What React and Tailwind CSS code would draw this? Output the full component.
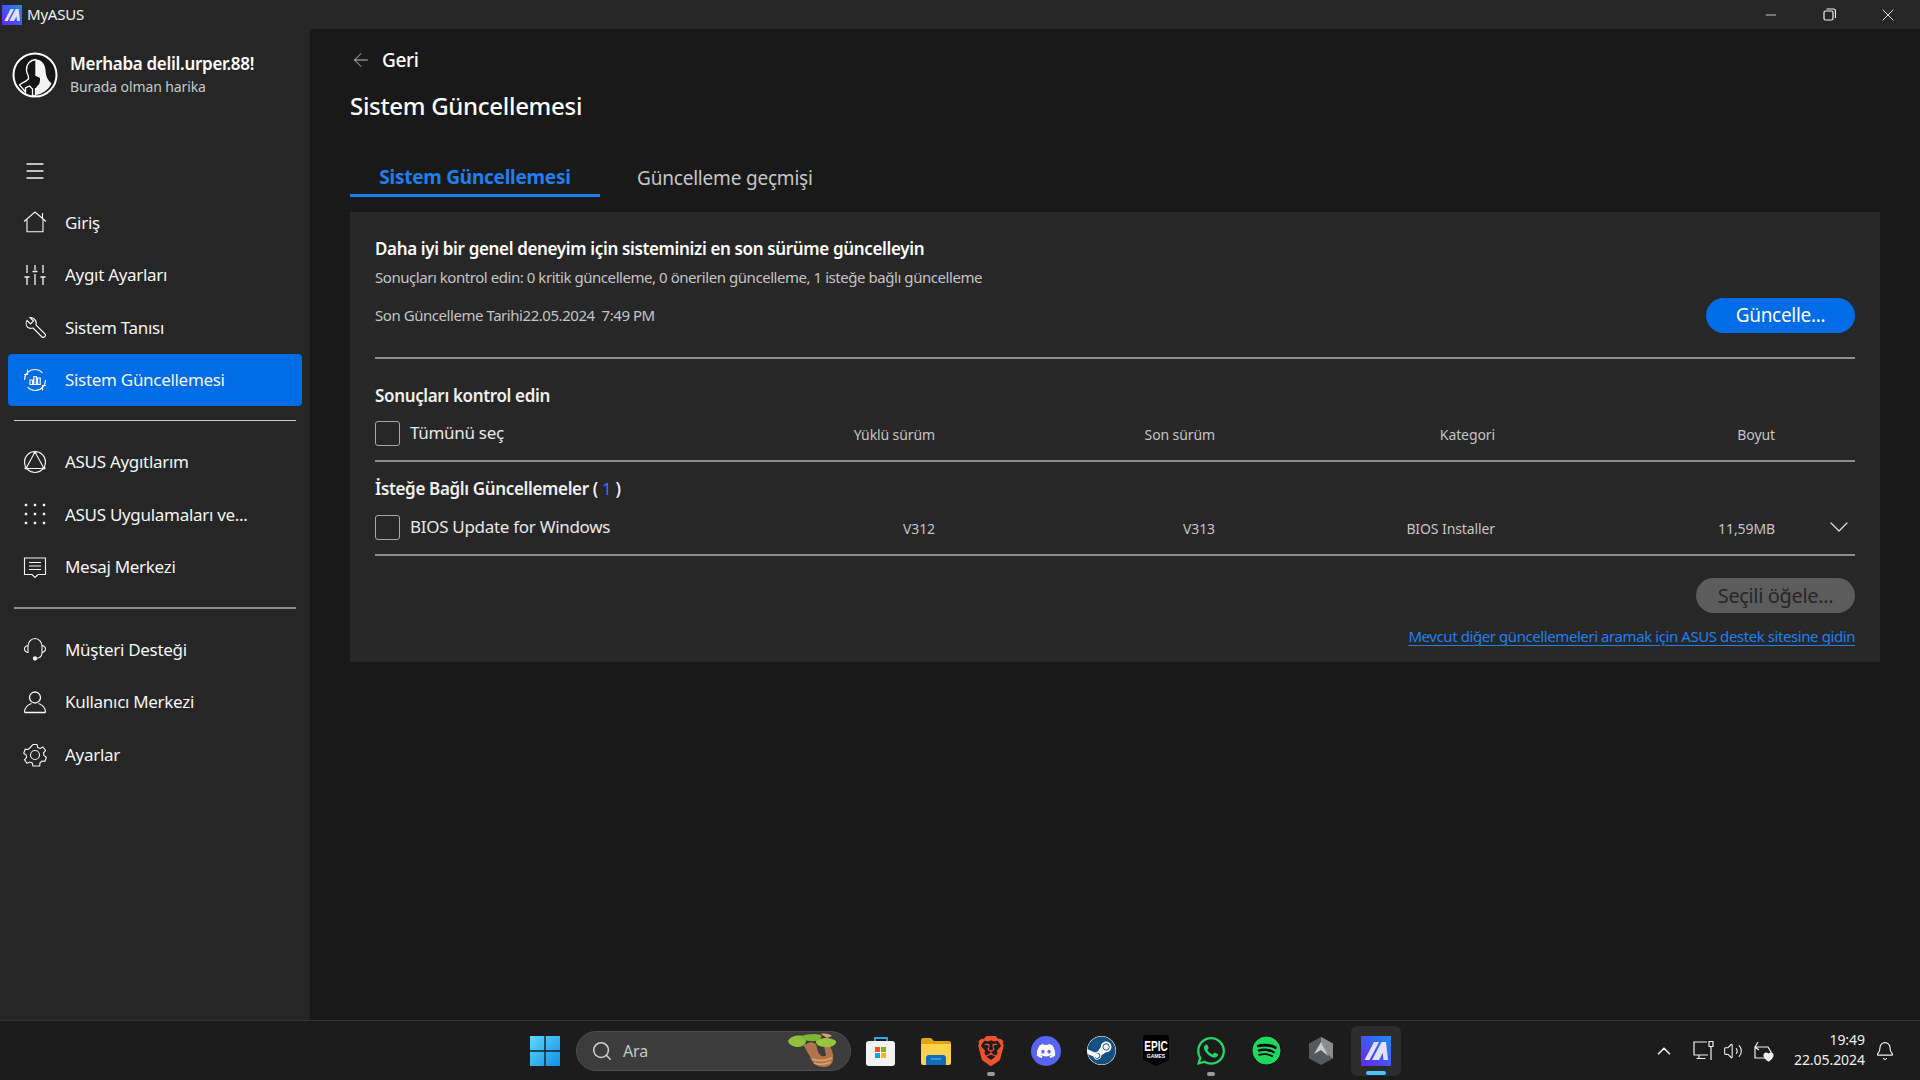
import React from 'react';
import { Minus, X, Menu, ArrowLeft, ChevronDown, ChevronUp, Search, Bell, Volume2 } from 'lucide-react';
import { FaDiscord, FaSteam, FaWhatsapp, FaSpotify } from 'react-icons/fa';
import { SiBrave } from 'react-icons/si';

const font = "font-['Noto_Sans',sans-serif]";

const Ico = ({ children, size = 24 }) => (
    <svg width={size} height={size} viewBox="0 0 24 24" fill="none" stroke="currentColor" strokeWidth="1.1" className="shrink-0">
        {children}
    </svg>
);

const HomeIcon = () => (
    <Ico>
        <path d="M1 11.500 12 2l11 9.500M4 9.500v12.200h16V9.500M19.500 3v5" />
    </Ico>
);
const SlidersIcon = () => (
    <Ico>
        <path d="M4 2v8M12 2v5M20 2v8M1.500 14h5M9.500 8.500h5M17.500 14h5M4 14v8M12 11v11M20 14v8" strokeWidth="1.300" />
    </Ico>
);
const WrenchIcon = () => (
    <Ico>
        <path d="M7 2.500 10.500 6 7.500 9 4 5.500C2.500 8 3 11 5 12.500c1.800 1.200 3.500 1 5 .5l9 9c.7.700 1.600.7 2.300 0l.7-.7c.7-.7.7-1.600 0-2.300l-9-9c.6-2 .2-4-1.300-5.500C10.300 3 8.500 2.300 7 2.500Z" />
    </Ico>
);
const UpdateIcon = () => (
    <Ico>
        <path d="M1.500 12C1.500 6 6 1.500 12 1.500c3 0 5.500 1.200 7.500 3.300M22.500 12c0 6-4.500 10.500-10.500 10.500-3 0-5.500-1.200-7.500-3.300" />
        <path d="M4.500 1.500v5h-.1h-3.500M19.500 22.500v-5h3.500" />
        <path d="M7 12h2.600v4.500H7zM10.800 8.500h2.600v8h-2.600zM14.600 10h2.600v6.500h-2.600z" strokeWidth="1.200" />
    </Ico>
);
const DevicesIcon = () => (
    <Ico>
        <circle cx="12" cy="12" r="10.500" />
        <path d="M12 2 21 18.500H3Z" />
        <circle cx="12" cy="2.200" r="1" fill="currentColor" />
        <circle cx="21" cy="18" r="1" fill="currentColor" />
        <circle cx="3" cy="18" r="1" fill="currentColor" />
    </Ico>
);
const DotsIcon = () => (
    <svg width="24" height="24" viewBox="0 0 24 24" fill="currentColor" className="shrink-0">
        {[3, 12, 21].map(y => [3, 12, 21].map(x => <rect key={`${x}-${y}`} x={x - 1.2} y={y - 1.2} width="2.400" height="2.400" />))}
    </svg>
);
const MessageIcon = () => (
    <Ico>
        <path d="M1.500 3h21v16.500h-7.500L12 22.500l-3-3H1.500Z" />
        <path d="M6 7.500h12M6 11h12M6 14.500h12" />
    </Ico>
);
const HeadsetIcon = () => (
    <Ico>
        <path d="M5 16V9.500C5 5 8 1.500 12 1.500S19 5 19 9.500V16c0 3-2 5-6 5.500" />
        <path d="M5 8.500C2.800 9 1.500 10.500 1.500 12S2.800 15 5 15.500M19 8.500c2.200.500 3.500 2 3.500 3.500S21.200 15 19 15.500" />
        <circle cx="12" cy="21.500" r="1.600" fill="currentColor" />
    </Ico>
);
const UserIcon = () => (
    <Ico>
        <circle cx="12" cy="7.500" r="5.500" strokeWidth="1.300" />
        <path d="M1.500 22.500c0-5 4-8 7-9M22.500 22.500c0-5-4-8-7-9M1.500 22.500h21" strokeWidth="1.300" />
    </Ico>
);
const GearIcon = () => (
    <Ico>
        <circle cx="12" cy="12" r="4.500" />
        <path d="M10 1.500h4l.7 3 2.500 1 2.700-1.500 2.700 3.500-2 2.300.3 2.700 2.500 1.800-1.500 4-3-.3-2 2-.2 3H10l-.8-3-2.400-1-2.800 1.300-2.500-3.500 2-2.300-.3-2.500-2.500-1.800 1.500-4 3 .3 2-2Z" />
    </Ico>
);

const AsusLogo = ({ size, id }) => (
    <svg width={size} height={size} viewBox="0 0 30 30" className="shrink-0">
        <defs>
            <linearGradient id={id} x1="0" y1="1" x2="1" y2="0">
                <stop offset="0" stopColor="#6a22f5" />
                <stop offset="1" stopColor="#1c8af0" />
            </linearGradient>
        </defs>
        <rect width="30" height="30" fill={`url(#${id})`} />
        <path d="M3.500 24 13 6h5L8.500 24ZM11 24 20.500 6h4.500l2 18h-4.500l-.8-7-3.700 7Z" fill="#dfe2ff" />
    </svg>
);

const Avatar = () => (
    <svg width="46" height="46" viewBox="0 0 46 46" className="shrink-0">
        <circle cx="23" cy="23" r="21.500" fill="#151515" stroke="#fff" strokeWidth="2" />
        <path d="M24 7.500c5.500 0 9 4.500 9.500 10.500.4 5 1 9 6 13.500-3 6.500-9.500 11-16.500 11.500V38l2-4c3-1 3-5 3-8l-4-2Z" fill="#f2f2f2" />
        <path d="M24 7.500c-6 .5-10 5-9.500 11 .3 3.500 2.500 5.500 2 8-.5 2.500-7 4-9 6.500l6 7V36l4-2 3 3v7h3V36" fill="none" stroke="#fff" strokeWidth="1.300" />
        <path d="M24 7.500V24" stroke="#fff" strokeWidth="1.300" />
    </svg>
);

const navGroups = [
    [
        { label: 'Giriş', icon: HomeIcon },
        { label: 'Aygıt Ayarları', icon: SlidersIcon },
        { label: 'Sistem Tanısı', icon: WrenchIcon },
        { label: 'Sistem Güncellemesi', icon: UpdateIcon, active: true },
    ],
    [
        { label: 'ASUS Aygıtlarım', icon: DevicesIcon },
        { label: 'ASUS Uygulamaları ve...', icon: DotsIcon },
        { label: 'Mesaj Merkezi', icon: MessageIcon },
    ],
    [
        { label: 'Müşteri Desteği', icon: HeadsetIcon },
        { label: 'Kullanıcı Merkezi', icon: UserIcon },
        { label: 'Ayarlar', icon: GearIcon },
    ],
];

function NavItem({ item }) {
    const Icon = item.icon;
    return (
        <div className={`flex items-center h-[52.6px] pl-[15px] gap-[18px] rounded-[4px] text-[#f5f5f5] text-[17px] tracking-[-0.3px] ${item.active ? 'bg-[#006ce5]' : ''}`}>
            <Icon />
            <span>{item.label}</span>
        </div>
    );
}

function Sidebar() {
    return (
        <aside className="w-[310px] shrink-0 bg-[#262626] flex flex-col">
            <div className="flex items-center h-[76px] mt-[8px] pl-[12px] gap-[12px]">
                <Avatar />
                <div className="flex flex-col -mt-[1px]">
                    <span className="text-white text-[17px] leading-[24px] font-semibold tracking-[-0.3px]">Merhaba delil.urper.88!</span>
                    <span className="text-[#c8c8c8] text-[14px] leading-[21px] tracking-[-0.1px]">Burada olman harika</span>
                </div>
            </div>
            <div className="h-[38px] mt-[39px] pl-[23px] flex items-center text-[#f5f5f5]">
                <Menu size={24} strokeWidth={1.3} />
            </div>
            <div className="px-[8px] mt-[6px] flex flex-col">
                {navGroups.map((group, i) => (
                    <div key={i}>
                        {i > 0 && <div className={`mx-[6px] my-[14px] ${i === 1 ? 'h-px bg-[#c9c9c9]' : 'h-[2px] bg-[#8c8c8c]'}`} />}
                        {group.map(item => <NavItem key={item.label} item={item} />)}
                    </div>
                ))}
            </div>
        </aside>
    );
}

function Checkbox() {
    return <span className="w-[25px] h-[25px] rounded-[3px] border-[1.5px] border-[#a8a8a8] shrink-0" />;
}

const rowGrid = 'grid grid-cols-[560px_280px_280px_280px_1fr] items-center';

function Main() {
    return (
        <main className="flex-1 bg-[#191919] pl-[40px] pr-[40px] min-w-0">
            <div className="flex items-center h-[30px] mt-[16px] gap-[10px] text-white">
                <ArrowLeft size={22} strokeWidth={1} className="text-[#d0d0d0]" />
                <span className="text-[19px] font-medium tracking-[-0.3px]">Geri</span>
            </div>
            <h1 className="text-white text-[24px] leading-[34px] font-medium tracking-[-0.3px] mt-[14px]">Sistem Güncellemesi</h1>
            <div className="flex mt-[30px] h-[44px]">
                <div className="w-[250px] h-[44px] border-b-[3px] border-[#1b7cf0] flex justify-center items-center pt-[7px] text-[#1f7fee] text-[19px] font-bold tracking-[-0.25px]">Sistem Güncellemesi</div>
                <div className="ml-[37px] flex items-center pt-[7px] text-[#c6c6c6] text-[19px] tracking-[-0.2px]">Güncelleme geçmişi</div>
            </div>
            <section className="bg-[#272727] mt-[15px] h-[450px] px-[25px] pt-[25px]">
                <div className="flex justify-between">
                    <div>
                        <p className="text-white text-[17px] leading-[24px] font-semibold tracking-[-0.35px]">Daha iyi bir genel deneyim için sisteminizi en son sürüme güncelleyin</p>
                        <p className="text-[#c4c4c4] text-[15px] leading-[20px] mt-[6px] tracking-[-0.45px]">Sonuçları kontrol edin: 0 kritik güncelleme, 0 önerilen güncelleme, 1 isteğe bağlı güncelleme</p>
                        <p className="text-[#c4c4c4] text-[15px] leading-[20px] mt-[18px] tracking-[-0.45px]">Son Güncelleme Tarihi22.05.2024&nbsp;&nbsp;7:49 PM</p>
                    </div>
                    <button className="w-[149px] h-[35px] mt-[61px] rounded-full bg-[#006ce5] text-white text-[19px] tracking-[-0.3px]">Güncelle...</button>
                </div>
                <div className="h-[2px] bg-[#8e8e8e] mt-[24px]" />
                <p className="text-[#f0f0f0] text-[17px] leading-[24px] font-semibold tracking-[-0.35px] mt-[25px]">Sonuçları kontrol edin</p>
                <div className={`${rowGrid} h-[38px] mt-[6px] text-[#c4c4c4] text-[14px] tracking-[-0.1px]`}>
                    <div className="flex justify-between items-center">
                        <div className="flex items-center gap-[10px] text-[#e8e8e8] text-[17px] tracking-[-0.3px]"><Checkbox />Tümünü seç</div>
                        <span className="pt-[3px]">Yüklü sürüm</span>
                    </div>
                    <span className="text-right pt-[3px]">Son sürüm</span>
                    <span className="text-right pt-[3px]">Kategori</span>
                    <span className="text-right pt-[3px]">Boyut</span>
                </div>
                <div className="h-[2px] bg-[#8e8e8e] mt-[8px]" />
                <p className="text-[#f0f0f0] text-[17px] leading-[24px] font-semibold tracking-[-0.35px] mt-[15px]">İsteğe Bağlı Güncellemeler ( <span className="text-[#1f7fee] font-normal">1</span> )</p>
                <div className={`${rowGrid} h-[38px] mt-[7px] text-[#c4c4c4] text-[14px] tracking-[-0.1px]`}>
                    <div className="flex justify-between items-center">
                        <div className="flex items-center gap-[10px] text-[#e8e8e8] text-[17px] tracking-[-0.3px]"><Checkbox />BIOS Update for Windows</div>
                        <span className="pt-[3px]">V312</span>
                    </div>
                    <span className="text-right pt-[3px]">V313</span>
                    <span className="text-right pt-[3px]">BIOS Installer</span>
                    <span className="text-right pt-[3px]">11,59MB</span>
                    <div className="flex justify-end"><ChevronDown size={32} strokeWidth={0.9} className="text-[#e0e0e0]" /></div>
                </div>
                <div className="h-[2px] bg-[#8e8e8e] mt-[8px]" />
                <div className="flex justify-end mt-[22px]">
                    <button className="w-[159px] h-[35px] rounded-full bg-[#5c5c5c] text-[#262626] text-[20px] tracking-[-0.35px]">Seçili öğele...</button>
                </div>
                <div className="flex justify-end mt-[13px]">
                    <a className="text-[#1f7fee] text-[15px] leading-[20px] underline underline-offset-[3px] tracking-[-0.42px]">Mevcut diğer güncellemeleri aramak için ASUS destek sitesine gidin</a>
                </div>
            </section>
        </main>
    );
}

const Slot = ({ children }) => <div className="w-[30px] h-[32px] flex items-center justify-center relative shrink-0">{children}</div>;
const RunDot = () => <span className="absolute -bottom-[9px] left-[11px] w-[8px] h-[4px] rounded-full bg-[#9a9a9a]" />;

function Taskbar() {
    return (
        <footer className="h-[60px] shrink-0 bg-[#1c1c1c] border-t border-[#333] flex items-center text-[#f0f0f0]">
            <div className="w-[530px] shrink-0" />
            <div className="flex items-center gap-[16px]">
                <svg width="30" height="30" viewBox="0 0 30 30" className="shrink-0">
                    <defs>
                        <linearGradient id="winGrad" x1="0" y1="0" x2="1" y2="1">
                            <stop offset="0" stopColor="#5fd8fd" />
                            <stop offset="1" stopColor="#0f8fe8" />
                        </linearGradient>
                    </defs>
                    <path d="M0 0h14.300v14.300H0zM15.700 0H30v14.300H15.700zM0 15.700h14.300V30H0zM15.700 15.700H30V30H15.700z" fill="url(#winGrad)" />
                </svg>
                <div className="w-[275px] h-[40px] rounded-full bg-[#3c3c3c] border border-[#4d4d4d] flex items-center pl-[14px] gap-[10px] relative">
                    <Search size={22} strokeWidth={1.7} className="text-[#d0d0d0]" />
                    <span className="text-[#c8c8c8] text-[16px] tracking-[-0.1px]">Ara</span>
                    <svg width="52" height="36" viewBox="0 0 52 36" className="absolute right-[11px] top-[1px]">
                        <path d="M16 12c3 3 4 8 7 11 1 6 6 11 14 11 7 0 10-5 9-13l-3-9-6 1 2 9c-2 3-6 1-8-3l-2-8-5-2Z" fill="#b1754a" />
                        <path d="M25 26c5 2 13 2 20-1M27 30c5 2 12 1 17-1" stroke="#e1a070" strokeWidth="1.500" fill="none" />
                        <path d="M1 8c2-5 12-7 17-4 3 4 0 9-6 10-5 0-10-2-11-6Z" fill="#8fc13b" />
                        <path d="M14 3c6-2 14-3 20-1 2 3-3 7-10 6-5 0-10-2-10-5Z" fill="#7fb335" />
                        <path d="M29 8c5-4 15-4 20 0 1 4-6 7-11 6-5 0-10-3-9-6Z" fill="#96c63f" />
                        <path d="M34 1c4-1 9 0 11 2l-5 2Z" fill="#d9a27a" />
                    </svg>
                </div>
                <div className="flex items-center gap-[25px] -ml-[1px]">
                    <Slot>
                        <svg width="30" height="30" viewBox="0 0 30 30">
                            <path d="M9 6V2h12v4" stroke="#29a8ea" strokeWidth="1.800" fill="none" />
                            <rect y="5" width="29" height="25" rx="3" fill="#f3f3f3" />
                            <path d="M9 11h5v5H9z" fill="#f25022" />
                            <path d="M15 11h5v5h-5z" fill="#7fba00" />
                            <path d="M9 17h5v5H9z" fill="#00a4ef" />
                            <path d="M15 17h5v5h-5z" fill="#ffb900" />
                        </svg>
                    </Slot>
                    <Slot>
                        <svg width="30" height="28" viewBox="0 0 30 28">
                            <path d="M0 3a2 2 0 0 1 2-2h8l3 3h15a2 2 0 0 1 2 2v4H0Z" fill="#e5a50f" />
                            <path d="M0 7h30v19a2 2 0 0 1-2 2H2a2 2 0 0 1-2-2Z" fill="#fcd24e" />
                            <path d="M5 28v-7a3 3 0 0 1 3-3h14a3 3 0 0 1 3 3v7Z" fill="#0f6cbd" />
                            <path d="M10 22h10" stroke="#5bb2ea" strokeWidth="1.200" />
                        </svg>
                    </Slot>
                    <Slot><SiBrave size={30} className="text-[#f1502f]" /><RunDot /></Slot>
                    <Slot><div className="w-[30px] h-[30px] rounded-full bg-[#5865f2] flex items-center justify-center"><FaDiscord size={20} className="text-white" /></div></Slot>
                    <Slot><FaSteam size={29} className="text-[#14507f] bg-white rounded-full" /></Slot>
                    <Slot>
                        <div className="w-[26px] h-[31px] bg-black rounded-t-[2px] [clip-path:polygon(0_0,100%_0,100%_80%,50%_100%,0_80%)] flex flex-col items-center pt-[3px] text-white font-['Liberation_Sans',sans-serif] font-bold">
                            <span className="text-[10px] leading-[12px] scale-y-[1.4] origin-top">EPIC</span>
                            <span className="text-[5px] leading-[7px] mt-[3px]">GAMES</span>
                        </div>
                    </Slot>
                    <Slot><FaWhatsapp size={32} className="text-[#25d366]" /><RunDot /></Slot>
                    <Slot><FaSpotify size={29} className="text-[#1ed760] bg-black rounded-full" /></Slot>
                    <Slot>
                        <svg width="28" height="30" viewBox="0 0 28 30">
                            <path d="M14 1 26 7.500v15L14 29 2 22.500v-15Z" fill="#55585c" />
                            <path d="M14 1 26 7.500v15L14 14Z" fill="#8a8d90" />
                            <path d="M14 6 7 18l7-4 7 6Z" fill="#c9cbcd" />
                        </svg>
                    </Slot>
                    <div className="w-[50px] h-[50px] -mx-[10px] rounded-[6px] bg-[#2c2c2c] flex items-center justify-center relative">
                        <AsusLogo size={30} id="asusTask" />
                        <span className="absolute bottom-[1px] left-[15px] w-[20px] h-[4px] rounded-full bg-[#4cc2ff]" />
                    </div>
                </div>
            </div>
            <div className="flex-1 flex items-center justify-end pr-[25px]">
                <ChevronUp size={22} strokeWidth={1.8} />
                <svg width="22" height="22" viewBox="0 0 22 22" fill="none" stroke="currentColor" strokeWidth="1.200" className="ml-[18px]">
                    <path d="M14 2H1v13h14M6 15v3M3.500 18.500h9" />
                    <path d="M16 1.500h4v5h-4zM18 6.500V20" />
                </svg>
                <Volume2 size={20} strokeWidth={1.3} className="ml-[8px]" />
                <svg width="22" height="22" viewBox="0 0 22 22" fill="none" stroke="currentColor" strokeWidth="1.200" className="ml-[9px]">
                    <path d="M3 7h13l3 5v6H3ZM6 2 3 7l4 3" />
                    <path d="M12 15c1-3 4-2 4.500 0 .5-2 3.500-3 4.500 0 0 3-4.500 6-4.500 6S12 18 12 15Z" fill="currentColor" />
                </svg>
                <div className="ml-[20px] -mt-[1px] flex flex-col items-end text-[14px] leading-[20px] tracking-[-0.05px]">
                    <span>19:49</span>
                    <span>22.05.2024</span>
                </div>
                <Bell size={20} strokeWidth={1.4} className="ml-[10px]" />
            </div>
        </footer>
    );
}

export default function App() {
    return (
        <div className={`w-[1920px] h-[1080px] flex flex-col overflow-hidden bg-[#191919] ${font}`}>
            <header className="h-[29px] shrink-0 bg-[#262626] flex items-center">
                <div className="ml-[2px]"><AsusLogo size={20} id="asusTitle" /></div>
                <span className="ml-[5px] text-[#f0f0f0] text-[15px] tracking-[-0.2px]">MyASUS</span>
                <div className="ml-auto flex items-center text-[#f0f0f0] pr-[2px]">
                    <span className="w-[58px] flex justify-center"><Minus size={16} strokeWidth={1.2} /></span>
                    <span className="w-[58px] flex justify-center">
                        <svg width="13" height="13" viewBox="0 0 13 13" fill="none" stroke="currentColor" strokeWidth="1.200">
                            <rect x="1" y="3" width="9" height="9" rx="1.500" />
                            <path d="M3.500 1h7a2 2 0 0 1 2 2v7" />
                        </svg>
                    </span>
                    <span className="w-[60px] flex justify-center"><X size={20} strokeWidth={1.1} /></span>
                </div>
            </header>
            <div className="flex-1 flex min-h-0">
                <Sidebar />
                <Main />
            </div>
            <Taskbar />
        </div>
    );
}
